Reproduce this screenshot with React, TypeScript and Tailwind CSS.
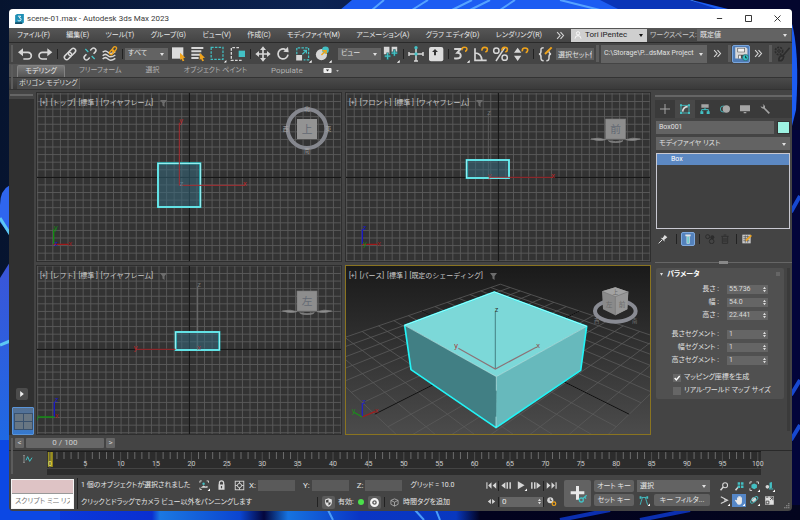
import React from "react";

type Kids = { children?: React.ReactNode };

/* ---------- shared pieces ---------- */

function Icon({ box, cls = "size-[18px]", children }: Kids & { box: string; cls?: string }) {
  return (
    <svg viewBox={box} className={`${cls} shrink-0`} fill="none" aria-hidden="true">
      {children}
    </svg>
  );
}

function Tool({ label, box, children }: Kids & { label: string; box: string }) {
  return (
    <button aria-label={label} className="flex h-5 w-5 shrink-0 items-center justify-center">
      <Icon box={box}>{children}</Icon>
    </button>
  );
}

function Sep() {
  return (
    <span className="flex w-[5px] shrink-0 justify-center">
      <span className="h-[10px] w-px bg-[#222]" />
    </span>
  );
}

function Grip() {
  return <span className="h-[17px] w-[3px] shrink-0 bg-[#5c5c5c]" />;
}

function Drop({ label, value, cls }: { label: string; value: string; cls: string }) {
  return (
    <span className={`relative block shrink-0 bg-[#636363] ${cls}`}>
      <select
        aria-label={label}
        defaultValue={value}
        className="block h-full w-full appearance-none bg-transparent pl-[3px] pr-2 text-inherit outline-none"
      >
        <option>{value}</option>
      </select>
      <svg viewBox="0 0 8 6" className="pointer-events-none absolute right-1 top-1/2 -mt-px h-[3px] w-1" aria-hidden="true">
        <path d="M0 0h8L4 6z" fill="#e0e0e0" />
      </svg>
    </span>
  );
}

const LIGHT = "#d6d6d6";
const TEAL = "#43c0c4";
const GOLD = "#f0a41c";

/* ---------- wallpaper ---------- */

function Wallpaper() {
  return (
    <svg viewBox="0 0 800 520" preserveAspectRatio="none" className="absolute inset-0 h-full w-full" aria-hidden="true">
      <defs>
        <linearGradient id="sky" x1="0" x2="1">
          <stop offset="0" stopColor="#06142f" />
          <stop offset=".4" stopColor="#0c2353" />
          <stop offset="1" stopColor="#04062e" />
        </linearGradient>
        <linearGradient id="petal" x1="0" x2="0" y1="0" y2="1">
          <stop offset="0" stopColor="#3b55d8" />
          <stop offset="1" stopColor="#1272ea" />
        </linearGradient>
        <linearGradient id="bottom" x1="0" x2="1">
          <stop offset="0" stopColor="#0b3fe0" />
          <stop offset=".19" stopColor="#0a2fd0" />
          <stop offset=".2" stopColor="#1b78e2" />
          <stop offset=".3" stopColor="#0b45d0" />
          <stop offset=".33" stopColor="#04063c" />
          <stop offset=".36" stopColor="#1673e0" />
          <stop offset=".45" stopColor="#0a35c4" />
          <stop offset=".57" stopColor="#0838c0" />
          <stop offset=".6" stopColor="#02021e" />
          <stop offset="1" stopColor="#03051e" />
        </linearGradient>
      </defs>
      <rect width="800" height="520" fill="url(#sky)" />
      <path d="M340 10 352 0H690Q770 0 793 40V100L790 10z" fill="#1c5cf2" />
      <path d="M372 10 384 0M412 10 428 0M452 10 472 0M470 10 490 0M500 10 515 0M560 0 600 10M690 0 710 10" stroke="#55a2ff" strokeWidth="2" />
      <path d="M600 0H690L720 10H620z" fill="#0a35b8" />
      <path d="M692 0H800V12H740z" fill="#04062e" />
      <path d="M791 20Q800 50 796 110L791 130z" fill="#1c5cf2" />
      <path d="M791 130H800V520H791z" fill="#02043a" />
      <path d="M791 212 800 196M791 395 800 380M791 440 800 425" stroke="#1748d0" strokeWidth="4" />
      <path d="M10 185Q0 190 0 205V222Q6 230 10 236z" fill="#2f66ee" />
      <path d="M0 218 10 234" stroke="#5cc8f4" strokeWidth="3" />
      <path d="M0 278 10 262V520H0z" fill="url(#petal)" />
      <path d="M0 345 10 341M0 460 10 450" stroke="#5cc8f4" strokeWidth="3" />
      <rect y="505" width="800" height="15" fill="url(#bottom)" />
      <path d="M0 440H10V511H60V520H0z" fill="#0c48e4" />
      <path d="M328 510 333 520M415 510 424 520M436 510 440 520" stroke="#4a9cf8" strokeWidth="2" />
      <path d="M560 520 610 510M640 520 690 510" stroke="#0b2fb0" strokeWidth="4" />
    </svg>
  );
}

/* ---------- title, menu, toolbar, ribbon ---------- */

function TitleBar() {
  return (
    <header className="flex h-[19px] shrink-0 items-center bg-white pl-[6px] text-[#3a3a3a]">
      <Icon box="0 0 28 32" cls="h-[10px] w-[9px]">
        <path d="M0 4 6 0H28V27L22 32H0z" fill="#1f8fb5" />
        <path d="M0 26H22V32H0z" fill="#17506a" />
        <path d="M9 7h9l-5 5q6 0 6 5t-6 5q-3 0-5-2" stroke="#fff" strokeWidth="3" />
      </Icon>
      <h1 className="ml-[3px] whitespace-nowrap text-[8px] leading-none">scene-01.max - Autodesk 3ds Max 2023</h1>
      <div className="ml-auto flex">
        {[
          ["最小化", "M5 12H19"],
          ["最大化", "M4 4H20V20H4z"],
          ["閉じる", "M4 4 20 20M20 4 4 20"],
        ].map(([name, d]) => (
          <button key={name} aria-label={name} className="flex h-[19px] w-[29px] items-center justify-center">
            <Icon box="0 0 24 24" cls="size-[9px]">
              <path d={d} stroke="#222" strokeWidth="2.4" />
            </Icon>
          </button>
        ))}
      </div>
    </header>
  );
}

const MENUS = [
  "ファイル(F)", "編集(E)", "ツール(T)", "グループ(G)", "ビュー(V)", "作成(C)",
  "モディファイヤ(M)", "アニメーション(A)", "グラフ エディタ(D)", "レンダリング(R)",
];

function Chevrons() {
  return (
    <Icon box="0 0 24 24" cls="size-[9px]">
      <path d="M3 3 11 12 3 21M12 3 20 12 12 21" stroke={LIGHT} strokeWidth="3" />
    </Icon>
  );
}

function MenuBar() {
  return (
    <nav className="flex h-[14px] shrink-0 items-center bg-gradient-to-b from-[#565656] to-[#444] pl-2 pr-px text-[7px] text-[#e8e8e8]">
      <div className="flex min-w-0 flex-1 justify-between pr-[14px]">
        {MENUS.map((m) => (
          <button key={m} className="whitespace-nowrap">{m}</button>
        ))}
      </div>
      <button aria-label="その他のメニュー" className="mr-[6px]"><Chevrons /></button>
      <button className="flex h-[13px] w-[76px] shrink-0 items-center bg-[#cfcfcf] pl-[3px] pr-1 text-[8px] text-[#222]">
        <Icon box="0 0 24 24" cls="size-2">
          <circle cx="12" cy="7" r="5" stroke="#fff" strokeWidth="2.5" />
          <path d="M3 23q0-9 9-9t9 9" stroke="#fff" strokeWidth="2.5" />
        </Icon>
        <span className="ml-[3px] whitespace-nowrap">Tori iPentec</span>
        <svg viewBox="0 0 8 6" className="ml-auto h-[3px] w-1" aria-hidden="true"><path d="M0 0h8L4 6z" fill="#111" /></svg>
      </button>
      <span className="ml-[3px] w-[47px] whitespace-nowrap text-[7px] text-[#c8c8c8]">ワークスペース:</span>
      <Drop label="ワークスペース" value="既定値" cls="h-[12px] w-[94px] text-[7px]" />
    </nav>
  );
}

const HOOK = "q-1-10 8-10t8 7q0 5-6 7";

function Toolbar() {
  return (
    <div role="toolbar" aria-label="メイン ツールバー" className="flex h-[22px] shrink-0 items-center border-t border-[#2a2a2a] bg-[#454545] text-[7px] text-[#e0e0e0]">
      <span className="ml-[2px] mr-[1px] w-[3px]"><span className="block h-[17px] w-[2px] bg-[#5c5c5c]" /></span>
      <Tool label="元に戻す" box="48 132 54 54">
        <path d="M62 154H84a10 10 0 0 1 0 20H70" stroke={LIGHT} strokeWidth="5" />
        <path d="M54 154l15-12v24z" fill={LIGHT} />
      </Tool>
      <Tool label="やり直し" box="107 132 54 54">
        <path d="M148 154H126a10 10 0 0 0 0 20H140" stroke={LIGHT} strokeWidth="5" />
        <path d="M156 154l-15-12v24z" fill={LIGHT} />
      </Tool>
      <Sep />
      <Tool label="リンク" box="182 132 54 54">
        <g transform="rotate(-45 209 159)" stroke={LIGHT} strokeWidth="4.5">
          <rect x="188" y="152" width="25" height="14" rx="7" />
          <rect x="205" y="152" width="25" height="14" rx="7" />
        </g>
      </Tool>
      <Tool label="リンク解除" box="243 132 54 54">
        <g transform="rotate(-45 270 159)" stroke={LIGHT} strokeWidth="4.5">
          <path d="M262 152h-7a7 7 0 0 0 0 14h7M278 152h7a7 7 0 0 1 0 14h-7" />
        </g>
        <path d="M256 144l9 9M275 165l9 9" stroke={TEAL} strokeWidth="4" />
      </Tool>
      <Tool label="スペース ワープにバインド" box="304 132 54 54">
        <path d="M309 154q8-8 16 0t22-2M309 164q8-8 16 0t22-2M309 174q8-8 16 0t22-2" stroke={LIGHT} strokeWidth="4.5" />
        <g transform="rotate(-50 340 149)" stroke={GOLD} strokeWidth="4">
          <rect x="326" y="144" width="16" height="10" rx="5" />
          <rect x="338" y="144" width="16" height="10" rx="5" />
        </g>
      </Tool>
      <Sep />
      <Drop label="選択フィルタ" value="すべて" cls="h-[12px] w-[43px]" />
      <Tool label="オブジェクトを選択" box="508 132 54 54">
        <rect x="517" y="139" width="34" height="34" fill="#dcdcdc" />
        <path d="M541 155l16 15-7 1 4 8-5 2-4-8-4 4z" fill={GOLD} />
      </Tool>
      <Tool label="名前による選択" box="570 132 54 54">
        <path d="M577 141h36M577 151h30M577 161h30M577 171h22" stroke={LIGHT} strokeWidth="6" />
        <path d="M602 155l16 15-7 1 4 8-5 2-4-8-4 4z" fill={GOLD} />
      </Tool>
      <Tool label="矩形選択領域" box="634 132 58 58">
        <rect x="641" y="140" width="38" height="38" stroke={TEAL} strokeWidth="4" strokeDasharray="8 4" />
        <path d="M690 180v8h-8z" fill="#fff" />
      </Tool>
      <Tool label="ウィンドウ / 交差" box="694 132 54 54">
        <path d="M724 140H701V178H730V172" stroke={LIGHT} strokeWidth="4" strokeDasharray="8 4" />
        <rect x="723" y="149" width="19" height="19" fill={TEAL} />
      </Tool>
      <Sep />
      <Tool label="移動" box="0 0 54 54">
        <path d="M27 9V45M9 27H45" stroke={LIGHT} strokeWidth="5" />
        <path d="M27 4l9 11H18zM27 50l9-11H18zM4 27l11-9v18zM50 27l-11-9v18z" fill={LIGHT} />
      </Tool>
      <Tool label="回転" box="0 0 54 54">
        <path d="M35 14A15 15 0 1 0 42 29" stroke={LIGHT} strokeWidth="5" />
        <path d="M28 20 42 5 44 22z" fill={LIGHT} />
      </Tool>
      <Tool label="スケール" box="0 0 58 58">
        <path d="M9 30V9H47V48H31" stroke={TEAL} strokeWidth="4" strokeDasharray="8 4" />
        <path d="M7 32H26V50H7z" fill={LIGHT} />
        <path d="M27 30 38 19M30 17h10v10" stroke={TEAL} strokeWidth="4" />
        <path d="M57 48v9h-9z" fill="#fff" />
      </Tool>
      <Tool label="配置" box="0 0 58 58">
        <circle cx="24" cy="31" r="18" fill={LIGHT} />
        <circle cx="37" cy="16" r="11" fill={TEAL} />
        <path d="M24 32 36 20M27 18h12v11" stroke={GOLD} strokeWidth="4.5" />
        <path d="M57 48v9h-9z" fill="#fff" />
      </Tool>
      <span className="w-[5px] shrink-0" />
      <Drop label="参照座標系" value="ビュー" cls="h-[12px] w-[43px]" />
      <Tool label="基点の中心を使用" box="0 0 58 58">
        <path d="M6 6H24V30H6zM31 6H49V22H31z" fill={LIGHT} />
        <path d="M18 24V48M8 36H28M40 14V36M30 26H50" stroke="#2d6668" strokeWidth="8" />
        <path d="M18 26V46M9 36H27M40 17V35M31 26H49" stroke={TEAL} strokeWidth="4" />
        <path d="M57 48v9h-9z" fill="#fff" />
      </Tool>
      <Sep />
      <Tool label="選択とマニピュレート" box="0 0 54 54">
        <path d="M27 10V48M6 27H48M6 21V33M48 21V33M21 48H33" stroke={LIGHT} strokeWidth="4.5" />
        <circle cx="27" cy="8" r="5" fill={TEAL} />
        <circle cx="27" cy="27" r="5" fill={TEAL} />
      </Tool>
      <Tool label="キーボード ショートカットの上書き" box="0 0 54 54">
        <rect x="6" y="6" width="43" height="43" rx="6" fill="#dcdcdc" />
        <path d="M24 12l9 9h-6v10h-6V21h-6z" fill="#333" />
      </Tool>
      <Sep />
      <Tool label="3D スナップ" box="0 0 58 58">
        <path d="M7 13H27L17 25Q29 25 28 36 26 46 7 43" stroke={LIGHT} strokeWidth="6.5" />
        <path d={`M32 17${HOOK}`} stroke={GOLD} strokeWidth="5" />
        <path d="M57 48v9h-9z" fill="#fff" />
      </Tool>
      <Tool label="角度スナップ" box="0 0 54 54">
        <path d="M9 10V46H44M9 24Q28 24 30 46" stroke={LIGHT} strokeWidth="5" />
        <path d={`M30 17${HOOK}`} stroke={GOLD} strokeWidth="5" />
      </Tool>
      <Tool label="パーセント スナップ" box="0 0 54 54">
        <circle cx="13" cy="17" r="8" stroke={LIGHT} strokeWidth="4.5" />
        <circle cx="38" cy="38" r="8" stroke={LIGHT} strokeWidth="4.5" />
        <path d="M12 48 38 8" stroke={LIGHT} strokeWidth="4.5" />
        <path d={`M30 17${HOOK}`} stroke={GOLD} strokeWidth="5" />
      </Tool>
      <Tool label="スピナー スナップ" box="0 0 54 54">
        <path d="M17 8 28 23H6zM17 48 28 32H6z" fill={LIGHT} />
        <path d={`M31 19${HOOK}`} stroke={GOLD} strokeWidth="5" />
      </Tool>
      <Sep />
      <Tool label="名前付き選択セットを編集" box="0 0 54 54">
        <path d="M20 8q-9 0-8 8 1 10-6 11 7 1 6 11-1 9 8 9M28 47q9 0 8-9-1-10 6-11-6-1-6-8" stroke={LIGHT} strokeWidth="4.5" />
        <path d="M24 27 44 7" stroke={GOLD} strokeWidth="6" />
      </Tool>
      <input aria-label="選択セット" defaultValue="選択セット作成" className="h-[12px] w-[38px] shrink-0 bg-[#5e5e5e] px-[2px] text-[7px] outline-none" />
      <span className="ml-[2px] mr-[2px] flex"><Grip /></span>
      <Drop label="プロジェクト フォルダ" value="C:\Storage\P...dsMax Project" cls="h-[18px] w-[106px] text-[7px]" />
      <span className="min-w-0 flex-1" />
      <button aria-label="さらに表示"><Chevrons /></button>
      <span className="ml-[6px] mr-px flex"><Grip /></span>
      <button aria-label="自動バックアップ" className="flex size-[18px] shrink-0 items-center justify-center rounded-[2px] border border-[#79a5dc] bg-[#4f7cb6]">
        <Icon box="0 0 48 48" cls="size-[15px]">
          <path d="M4 4H38L43 9V40H4z" fill="#d8d8d8" />
          <path d="M11 6H35V20H11zM14 28H34V40H14z" fill="#4b4b4b" />
          <path d="M13 8H33V18H13zM16 30H22V40H16z" fill="#f2f2f2" />
          <circle cx="37" cy="37" r="10" fill="#33bfc2" stroke="#28565c" strokeWidth="2" />
          <path d="M37 31V38H42" stroke="#133" strokeWidth="3" />
        </Icon>
      </button>
      <button aria-label="さらに表示" className="ml-1"><Chevrons /></button>
      <span className="ml-[6px] flex"><Grip /></span>
      <Tool label="環境設定" box="0 0 54 54">
        <circle cx="18" cy="18" r="11" stroke="#2c2c2c" strokeWidth="5" strokeDasharray="6 3" />
        <circle cx="18" cy="18" r="4" stroke="#2c2c2c" strokeWidth="3" />
        <path d="M50 8 28 34M28 32q-12 2-10 15 12 2 14-12z" stroke="#2c2c2c" strokeWidth="5" />
      </Tool>
    </div>
  );
}

function Ribbon() {
  return (
    <section aria-label="リボン" className="relative shrink-0 text-[7px] text-[#b0b0b0]">
      <div className="flex h-[13px] items-end bg-[#555] pl-2">
        <button className="h-3 w-12 rounded-t-[2px] border border-b-0 border-[#828282] bg-gradient-to-b from-[#7a7a7a] to-[#555] leading-none text-[#e4e4e4]">モデリング</button>
        <div className="flex h-[13px] items-center gap-6 pl-[14px]">
          <button>フリーフォーム</button>
          <button>選択</button>
          <button>オブジェクト ペイント</button>
          <button className="text-[8px]">Populate</button>
        </div>
        <button aria-label="リボン表示" className="ml-5 flex h-[13px] items-center gap-1">
          <Icon box="0 0 26 16" cls="h-[5px] w-[9px]">
            <rect width="26" height="16" rx="3" fill="#ececec" />
            <path d="M8 5h10l-5 6z" fill="#333" />
          </Icon>
          <Icon box="0 0 8 6" cls="h-[2px] w-[3px]"><path d="M0 0h8L4 6z" fill="#bbb" /></Icon>
        </button>
      </div>
      <div className="flex h-[13px] items-center border-y border-[#333] bg-gradient-to-b from-[#4a4a4a] to-[#3a3a3a] pl-2">
        <button className="h-[11px] whitespace-nowrap border-r border-[#5a5a5a] bg-[#4c4c4c] px-[2px] leading-none text-[#dcdcdc]">ポリゴン モデリング</button>
      </div>
      <span className="absolute left-[2px] top-px h-6 w-[2px] bg-[#5c5c5c]" />
    </section>
  );
}

/* ---------- viewports ---------- */

function ViewLabel({ name, mode }: { name: string; mode: string }) {
  return (
    <div className="absolute left-[3px] top-[5px] flex items-center gap-[3px] text-[7px] leading-[10px] text-[#c8c8c8] [font-feature-settings:normal]">
      <button>[+]</button>
      <button>[{name}]</button>
      <button>[標準 ]</button>
      <button>[{mode}]</button>
      <button aria-label="フィルタ" className="ml-1">
        <Icon box="0 0 20 20" cls="size-[7px]"><path d="M0 0H20L13 9V20L7 16V9z" fill="#6c6c6c" /></Icon>
      </button>
    </div>
  );
}

function Viewport({ name, mode, box, active, children }: Kids & { name: string; mode: string; box: string; active?: boolean }) {
  return (
    <section
      aria-label={name}
      className={`relative min-h-0 min-w-0 overflow-hidden border ${active ? "border-[#8a7420]" : "border-[#2e2e2e]"} bg-[#333]`}
    >
      <svg viewBox={box} preserveAspectRatio="xMidYMid slice" className="absolute inset-0 h-full w-full" fontFamily="'Liberation Sans', 'Noto Sans CJK JP', sans-serif" fontSize="22">
        {children}
      </svg>
      <ViewLabel name={name} mode={mode} />
    </section>
  );
}

function Grid({ cx, cy }: { cx: number; cy: number }) {
  const step = 22.75;
  const n = Array.from({ length: 81 }, (_, i) => i - 40);
  return (
    <g>
      <g stroke="#5a5a5a" strokeWidth="2.8">
        {n.map((i) => <path key={i} d={`M${cx + i * step} -40V560M-60 ${cy + i * step}H1100`} />)}
      </g>
      <path d={`M${cx} -40V560M-60 ${cy}H1100`} stroke="#0c0c0c" strokeWidth="3" />
    </g>
  );
}

function SideCube({ x, y, glyph }: { x: number; y: number; glyph: string }) {
  return (
    <g>
      <path
        d={`M${x - 74} ${y + 31}q24-6 44 2-22 6-44-2zM${x + 74} ${y + 31}q-24-6-44 2 22 6 44-2zM${x - 22} ${y + 36}q22 6 44 0l-6 4q-16 3-32 0z`}
        fill="#8f8f8f"
        stroke="#858585"
        strokeWidth="2"
      />
      <rect x={x - 30} y={y - 29} width="60" height="60" fill="#8d8d8d" stroke="#7a7a7a" strokeWidth="2" />
      <text x={x} y={y + 12} fontSize="32" textAnchor="middle" fill="#646a74">{glyph}</text>
    </g>
  );
}

function Tripod({ x, y, up, upColor, side, sideColor, flip, dot, dotColor }: {
  x: number; y: number; up: string; upColor: string; side: string; sideColor: string; flip?: boolean; dot: string; dotColor: string;
}) {
  const d = flip ? -1 : 1;
  return (
    <g>
      <path d={`M${x} ${y}V${y - 45}`} stroke={upColor} strokeWidth="4" />
      <path d={`M${x} ${y}h${45 * d}`} stroke={sideColor} strokeWidth="4" />
      <text x={x + 1} y={y - 44} fill={upColor}>{up}</text>
      <text x={x + 50 * d} y={y + 5} textAnchor="middle" fill={sideColor}>{side}</text>
      <text x={x + 2} y={y + 4} fill={dotColor}>{dot}</text>
    </g>
  );
}

function Selected({ x, y, w, h }: { x: number; y: number; w: number; h: number }) {
  return (
    <g>
      <rect x={x} y={y} width={w} height={h} fill="#35687c" fillOpacity=".55" stroke="#2fd8dc" strokeWidth="6" />
      <rect x={x} y={y} width={w} height={h} fill="none" stroke="#c8f6f8" strokeWidth="2" />
    </g>
  );
}

/* Projects a point of the ground plane, with u and v from -1 to 1, on the screen. */
function ground(u: number, v: number) {
  const w = 1 + 0.236 * u + 0.236 * v;
  const x = (483.5 + 404 * u - 179.4 * v) / w;
  const y = (271.3 - 82.2 * u - 82.2 * v) / w;
  return `${x.toFixed(1)} ${y.toFixed(1)}`;
}

function Perspective() {
  const lines = Array.from({ length: 15 }, (_, i) => (i - 7) / 7);
  return (
    <g>
      <defs>
        <linearGradient id="depth" x1="0" x2="0" y1="0" y2="1">
          <stop offset="0" stopColor="#191919" />
          <stop offset="1" stopColor="#4c4c4c" />
        </linearGradient>
      </defs>
      <rect x="-100" y="10" width="1200" height="520" fill="url(#depth)" />
      <g stroke="#5a5a5a" strokeWidth="2.4">
        {lines.map((t) => <path key={t} d={`M${ground(t, -1)}L${ground(t, 1)}M${ground(-1, t)}L${ground(1, t)}`} />)}
      </g>
      <path d={`M${ground(-1, 0)}L${ground(1, 0)}M${ground(0, -1)}L${ground(0, 1)}`} stroke="#0e0e0e" strokeWidth="3" />
      <path d="M463 96 740 199 469 350 194 196z" fill="#7cd8d8" />
      <path d="M194 196 469 350 468 503 213 329z" fill="#417f84" />
      <path d="M740 199 469 350 468 503 722 331z" fill="#67b9bc" />
      <path d="M194 196 463 96 740 199 722 331 468 503 213 329z" fill="none" stroke="#22f4f6" strokeWidth="5" strokeLinejoin="round" />
      <path d="M740 199 469 350 194 196M469 350V392M468 470V503" fill="none" stroke="#bdeeee" strokeWidth="2" />
      <path d="M194 196 463 96 740 199" fill="none" stroke="#c4fafa" strokeWidth="2.5" />
      <path d="M466 327V155" stroke="#4b8b8e" strokeWidth="3.5" />
      <path d="M355 265 466 327 590 261" fill="none" stroke="#8c7276" strokeWidth="3.5" />
      <text x="464" y="156" fill="#333">z</text>
      <text x="343" y="263" fill="#a33">y</text>
      <text x="589" y="263" fill="#844">x</text>
      <ellipse cx="826" cy="153" rx="61" ry="32" fill="none" stroke="#898b93" strokeWidth="12" />
      <path d="M786 94 826 82 865 95 862 148 826 166 789 148z" fill="#8a8a8a" />
      <path d="M786 94 826 110 865 95 826 82z" fill="#a2a2a2" />
      <path d="M826 110 865 95 862 148 826 166z" fill="#979797" />
      <path d="M786 94 826 110 865 95M826 110V166" fill="none" stroke="#757575" strokeWidth="2" />
      <text x="818" y="103" fontSize="16" fill="#686868">上</text>
      <text x="797" y="141" fontSize="20" fill="#6c6c6c">左</text>
      <text x="836" y="140" fontSize="20" fill="#6c6c6c">前</text>
      <text x="762" y="188" fontSize="16" fill="#777">西</text>
      <text x="876" y="188" fontSize="16" fill="#777">南</text>
      <path d="M67 471V430" stroke="#2222c0" strokeWidth="4" />
      <path d="M67 471 106 454" stroke="#a51c1c" strokeWidth="4" />
      <path d="M67 471 42 457" stroke="#1c8a1c" strokeWidth="4" />
      <text x="67" y="433" fill="#2222c0">z</text>
      <text x="104" y="459" fill="#a51c1c">x</text>
      <text x="35" y="460" fill="#1c8a1c">y</text>
    </g>
  );
}

const RED = "#a01818";
const GREEN = "#128c12";
const BLUE = "#1818c4";

function Viewports() {
  return (
    <div className="grid min-w-0 flex-1 grid-cols-2 grid-rows-2 gap-[3px]">
      <Viewport name="トップ" mode="ワイヤフレーム" box="111 9 912 504">
        <Grid cx={568} cy={262} />
        <Selected x={474} y={220} w={127} h={131} />
        <path d="M538 285V98M538 286H734" stroke="#a52c30" strokeWidth="3" fill="none" />
        <text x="538" y="98" fill="#c02424">y</text>
        <text x="729" y="287" fill="#c02424">x</text>
        <text x="539" y="287" fill="#5f7f90">z</text>
        <circle cx="921" cy="116" r="58" fill="none" stroke="#85878e" strokeWidth="12" />
        <rect x="891" y="87" width="60" height="60" fill="#939393" />
        <text x="921" y="128" fontSize="32" textAnchor="middle" fill="#646a74">上</text>
        <g fontSize="18" textAnchor="middle" fill="#a4a4a4">
          <text x="921" y="62">北</text>
          <text x="921" y="190">南</text>
          <text x="857" y="124">西</text>
          <text x="985" y="124">東</text>
        </g>
        <Tripod x={161} y={463} up="y" upColor={GREEN} side="x" sideColor={RED} dot="z" dotColor={BLUE} />
      </Viewport>
      <Viewport name="フロント" mode="ワイヤフレーム" box="18 9 912 504">
        <Grid cx={475} cy={262} />
        <path d="M445 262V75" stroke="#5c5c5c" strokeWidth="3" />
        <Selected x={380} y={210} w={127} h={54} />
        <path d="M448 262H640" stroke="#a52c30" strokeWidth="3" />
        <text x="442" y="75" fill="#777">z</text>
        <text x="634" y="264" fill="#c02424">x</text>
        <text x="443" y="264" fill="#953c44">y</text>
        <SideCube x={827} y={116} glyph="前" />
        <Tripod x={67} y={463} up="z" upColor={BLUE} side="x" sideColor={RED} dot="y" dotColor={GREEN} />
      </Viewport>
      <Viewport name="レフト" mode="ワイヤフレーム" box="111 12 912 504">
        <Grid cx={568} cy={262} />
        <path d="M593 262V75" stroke="#6c6c6c" strokeWidth="3" />
        <Selected x={527} y={210} w={131} h={54} />
        <path d="M408 262H527" stroke="#a52c30" strokeWidth="3" />
        <text x="592" y="75" fill="#777">z</text>
        <text x="401" y="264" fill="#c02424">y</text>
        <text x="592" y="264" fill="#953c44">x</text>
        <SideCube x={921} y={116} glyph="左" />
        <Tripod x={163} y={465} up="z" upColor={BLUE} side="y" sideColor={GREEN} flip dot="x" dotColor={RED} />
      </Viewport>
      <Viewport name="パース" mode="既定のシェーディング" box="18 18 912 504" active>
        <Perspective />
      </Viewport>
    </div>
  );
}

function LayoutStrip() {
  return (
    <aside className="flex w-[25px] shrink-0 flex-col">
      <span className="mx-px mt-[2px] h-[2px] bg-[#656565]" />
      <div className="mt-[3px] flex flex-1 flex-col items-end justify-end bg-[#303030]">
        <button aria-label="レイアウトを開く" className="mb-[7px] mr-[6px] flex size-3 items-center justify-center rounded-[2px] bg-[#4c4c4c]">
          <Icon box="0 0 12 20" cls="h-[6px] w-[4px]"><path d="M0 0 12 10 0 20z" fill="#eee" /></Icon>
        </button>
        <button aria-label="4 分割レイアウト" className="flex h-7 w-[22px] items-center justify-center rounded-[1px] border border-[#5a94d8] bg-gradient-to-b from-[#56708f] to-[#3579cf]">
          <span className="grid grid-cols-2 gap-px bg-[#39516e] p-px">
            {[0, 1, 2, 3].map((i) => <span key={i} className="h-[7px] w-2 bg-[#687683]" />)}
          </span>
        </button>
      </div>
    </aside>
  );
}

/* ---------- command panel ---------- */

function Spin({ id, label, value }: { id: string; label: string; value: string }) {
  return (
    <div className="flex h-[10px] items-center justify-end">
      <label htmlFor={id} className="whitespace-nowrap">{label} :</label>
      <span className="ml-2 mr-4 flex h-[9px] w-[41px] items-center bg-[#656565] pr-[2px]">
        <input id={id} defaultValue={value} className="h-full w-full min-w-0 bg-transparent pl-[2px] text-[7px] text-[#dadada] outline-none" />
        <SpinArrows />
      </span>
    </div>
  );
}

function SpinArrows() {
  return (
    <Icon box="0 0 10 20" cls="h-[7px] w-[3px]"><path d="M0 8 5 1 10 8zM0 12 5 19 10 12z" fill="#dcdcdc" /></Icon>
  );
}

function PanelTabs() {
  const t = "#a4a4a4";
  const tabs: [string, React.ReactNode][] = [
    ["作成", <path key="a" d="M15 0V30M0 15H30" stroke={t} strokeWidth="3" />],
    ["修正", (
      <g key="b">
        <rect x="3" y="4" width="24" height="23" stroke={TEAL} strokeWidth="2.5" />
        <path d="M8 23Q9 9 23 8" stroke="#ddd" strokeWidth="5" />
        <path d="M0 1H6V7H0zM24 1H30V7H24zM0 24H6V30H0zM24 24H30V30H24z" fill={TEAL} />
      </g>
    )],
    ["階層", (
      <g key="c">
        <path d="M4 1H26V11H4z" fill={t} />
        <path d="M15 11V17M5 24V17H25V24" stroke={TEAL} strokeWidth="3" />
        <path d="M1 22H10V30H1zM20 22H29V30H20z" fill={TEAL} />
      </g>
    )],
    ["モーション", (
      <g key="d">
        <circle cx="10" cy="15" r="9" stroke={TEAL} strokeWidth="2.5" />
        <circle cx="19" cy="15" r="11" fill="#a8a8a8" />
      </g>
    )],
    ["表示", <path key="e" d="M0 4H30V22H0zM11 24H19V28H11z" fill={t} />],
    ["ユーティリティ", (
      <g key="f">
        <path d="M12 12 28 28" stroke={t} strokeWidth="5" />
        <path d="M2 6A8 8 0 0 0 14 13 8 8 0 0 0 8 1L11 6 7 10z" fill={t} />
      </g>
    )],
  ];
  return (
    <div role="tablist" className="flex h-[18px] bg-[#3a3a3a]">
      {tabs.map(([name, art]) => (
        <button key={name} role="tab" aria-label={name} aria-selected={name === "修正"} className={`flex w-5 items-center justify-center ${name === "修正" ? "bg-[#484848]" : ""}`}>
          <Icon box="0 0 30 30" cls="size-[10px]">{art}</Icon>
        </button>
      ))}
    </div>
  );
}

function StackTools() {
  const bar = <span className="h-[10px] w-px bg-[#222]" />;
  return (
    <div className="mt-[2px] flex h-4 items-center text-[#2c2c2c]">
      <button aria-label="スタックを固定" className="ml-[3px] mr-[8px]">
        <Icon box="0 0 30 30" cls="size-[10px]">
          <path d="M2 28 12 18" stroke="#ddd" strokeWidth="3" />
          <path d="M8 11 14 12 20 3 28 10 19 17 20 23z" fill="#ddd" />
        </Icon>
      </button>
      {bar}
      <button aria-label="最終結果を表示" className="ml-[4px] mr-[4px] flex size-[14px] items-center justify-center rounded-[2px] border border-[#7fa9de] bg-[#5482bc]">
        <Icon box="0 0 20 34" cls="h-[10px] w-[6px]">
          <path d="M1 2H19V8H1z" fill="#e4e4e4" />
          <path d="M6 8H15V32H6z" fill="#6ec9cc" stroke="#e4e4e4" strokeWidth="2" />
        </Icon>
      </button>
      {bar}
      <button aria-label="固有にする" className="ml-[5px] mr-[5px]">
        <Icon box="0 0 30 30" cls="size-[10px]">
          <circle cx="8" cy="8" r="6" stroke="currentColor" strokeWidth="3" />
          <circle cx="22" cy="10" r="6" fill="currentColor" />
          <circle cx="20" cy="22" r="7" stroke="currentColor" strokeWidth="3" />
        </Icon>
      </button>
      <button aria-label="モディファイヤを除去" className="mr-[6px]">
        <Icon box="0 0 30 30" cls="size-[10px]">
          <path d="M4 7H26M11 3H19M7 8V28H23V8M12 12V24M18 12V24" stroke="currentColor" strokeWidth="2.5" />
        </Icon>
      </button>
      {bar}
      <button aria-label="モディファイヤ セットを設定" className="ml-[5px]">
        <Icon box="0 0 30 30" cls="size-[10px]">
          <rect x="1" y="2" width="25" height="26" fill="#c8c8c8" />
          <path d="M4 8H22M4 14H22M4 20H22M10 4V26M17 4V26" stroke="#555" strokeWidth="2" />
          <path d="M12 20 28 4" stroke={GOLD} strokeWidth="5" />
        </Icon>
      </button>
    </div>
  );
}

function Check({ label, on }: { label: string; on?: boolean }) {
  return (
    <label className="flex h-[13px] items-center gap-[3px] pl-[17px] text-[7px]">
      <span className="relative flex size-2 shrink-0">
        <input type="checkbox" defaultChecked={on} className="peer size-2 appearance-none bg-[#666]" />
        <svg viewBox="0 0 24 24" className="pointer-events-none absolute inset-0 hidden size-2 peer-checked:block" fill="none" aria-hidden="true">
          <path d="M5 12 10 18 20 6" stroke="#fff" strokeWidth="4" />
        </svg>
      </span>
      <span className="whitespace-nowrap">{label}</span>
    </label>
  );
}

function CommandPanel() {
  return (
    <aside className="flex w-[139px] shrink-0 flex-col pl-[2px] pt-[3px] text-[7px] text-[#e0e0e0]">
      <span className="h-[2px] bg-[#656565]" />
      <div className="mt-[3px]"><PanelTabs /></div>
      <div className="mt-[3px] flex h-[13px] gap-[3px] pl-px pr-[2px]">
        <input aria-label="オブジェクト名" defaultValue="Box001" className="min-w-0 flex-1 bg-[#636363] pl-[3px] text-[7px] outline-none" />
        <button aria-label="オブジェクト カラー" className="w-[13px] border border-[#333] bg-[#9df2e2]" />
      </div>
      <div className="mt-[3px] pl-px pr-[2px]">
        <Drop label="モディファイヤ リスト" value="モディファイヤ リスト" cls="h-[13px] w-full" />
      </div>
      <ul aria-label="モディファイヤ スタック" className="ml-px mr-[2px] mt-[3px] h-[76px] border border-[#c9c9d2] bg-[#404040]">
        <li className="flex h-[11px] items-center bg-[#5c88c2] pl-[14px] text-white">Box</li>
      </ul>
      <StackTools />
      <div className="mt-[13px] flex h-1 items-center justify-center bg-[linear-gradient(#666,#666)] bg-[length:100%_1px] bg-center bg-no-repeat">
        <span className="h-[3px] w-[9px] bg-[#888]" />
      </div>
      <div className="mt-1 flex min-h-0 flex-1 gap-[3px]">
        <section className="mb-auto ml-px flex-1 rounded-[2px] bg-[#505050] pb-[2px]">
          <h2 className="flex h-3 items-center px-1 text-[7px] font-bold text-white">
            <Icon box="0 0 8 8" cls="mr-1 size-[3px]"><path d="M0 0H8L4 7z" fill="#ddd" /></Icon>
            パラメータ
            <span className="ml-auto size-1 bg-[#656565]" />
          </h2>
          <div className="mt-1 flex flex-col gap-[3px]">
            <Spin id="len" label="長さ" value="55.736" />
            <Spin id="wid" label="幅" value="54.0" />
            <Spin id="hei" label="高さ" value="22.441" />
          </div>
          <div className="mt-[9px] flex flex-col gap-[3px]">
            <Spin id="lseg" label="長さセグメント" value="1" />
            <Spin id="wseg" label="幅セグメント" value="1" />
            <Spin id="hseg" label="高さセグメント" value="1" />
          </div>
          <div className="mt-[6px]">
            <Check label="マッピング座標を生成" on />
            <Check label="リアル-ワールド マップ サイズ" />
          </div>
        </section>
        <span className="mb-1 mr-[2px] w-[3px] bg-[#3a3a3a]" />
      </div>
    </aside>
  );
}

/* ---------- time line ---------- */

function frameX(n: number) {
  return `${(0.4 + n * 0.9915).toFixed(3)}%`;
}

function Timeline() {
  const frames = Array.from({ length: 101 }, (_, i) => i);
  return (
    <section aria-label="タイムライン" className="relative shrink-0 text-[8px] text-[#d0d0d0]">
      <span className="absolute left-[2px] top-[2px] h-9 w-[2px] bg-[#5c5c5c]" />
      <div className="flex h-[14px] items-center gap-[2px] pl-[6px]">
        <button aria-label="前のフレーム" className="flex h-[10px] w-[9px] items-center justify-center rounded-[1px] bg-[#666] leading-none">&lt;</button>
        <button className="flex h-[10px] w-[78px] items-center justify-center rounded-[1px] bg-[#676767] leading-none">0 / 100</button>
        <button aria-label="次のフレーム" className="flex h-[10px] w-[9px] items-center justify-center rounded-[1px] bg-[#666] leading-none">&gt;</button>
      </div>
      <div className="flex h-[26px] items-start border-t border-[#2a2a2a] pl-[6px]">
        <button aria-label="ミニ カーブ エディタ" className="flex h-4 w-8 items-center pl-2">
          <Icon box="0 0 30 24" cls="h-2 w-[10px]">
            <path d="M3 1V22M0 1H6M0 22H6" stroke="#999" strokeWidth="2.5" />
            <path d="M9 16 14 5 20 19 27 8" stroke={TEAL} strokeWidth="3" />
          </Icon>
        </button>
        <div className="mr-[31px] h-6 min-w-0 flex-1 border-t border-[#1e1e1e] bg-[#2c2c2c]">
          <svg className="h-full w-full overflow-visible" aria-hidden="true">
            <line x1="0" x2="100%" y1="16.5" y2="16.5" stroke="#444" />
            <svg x={frameX(0)} className="overflow-visible"><rect x="-2" width="5" height="15" fill="#9a901e" /></svg>
            {frames.map((n) => (
              <line key={n} x1={frameX(n)} x2={frameX(n)} y1="0" y2={n % 5 === 0 ? 16 : 7} stroke={n % 5 === 0 ? "#505050" : "#6c6c6c"} />
            ))}
            {frames.filter((n) => n % 5 === 0).map((n) => (
              <text key={n} x={frameX(n)} y="14" textAnchor="middle" fill={n ? "#cccccc" : "#f2ea6c"} fontSize="7">{n}</text>
            ))}
          </svg>
        </div>
      </div>
    </section>
  );
}

/* ---------- status bar ---------- */

function Coord({ axis }: { axis: string }) {
  return (
    <label className="flex items-center gap-[2px]">
      {axis}:
      <input className="h-[11px] w-[37px] bg-[#5a5a5a] text-[8px] outline-none" />
    </label>
  );
}

function Small({ label, box, children, cls = "" }: Kids & { label: string; box: string; cls?: string }) {
  return (
    <button aria-label={label} className={`flex h-[13px] shrink-0 items-center justify-center ${cls}`}>
      <Icon box={box} cls="size-[11px]">{children}</Icon>
    </button>
  );
}

const DIV = <span className="h-[10px] w-px shrink-0 bg-[#222]" />;
const CORNER = <path d="M36 28v8h-8z" fill="#fff" />;

function StatusBar() {
  return (
    <footer className="flex h-[35px] shrink-0 items-start pl-[2px] pt-[2px] text-[7px] text-[#e4e4e4]">
      <div className="mt-px flex h-[30px] w-[63px] shrink-0 flex-col border border-[#f4f4f4] bg-white">
        <div className="h-[14px] border-b border-[#999] bg-[#dec3c5]" />
        <input aria-label="スクリプト ミニ リスナー" defaultValue="スクリプト ミニ リス" className="min-h-0 w-full flex-1 bg-white px-[3px] text-[7px] text-[#777] outline-none" />
      </div>
      <span className="ml-[3px] mr-[3px] h-[31px] w-px shrink-0 bg-[#222]" />
      <div className="flex min-w-0 flex-1 flex-col gap-[2px]">
        <div className="flex h-[15px] items-center whitespace-nowrap">
          <p className="w-[116px] shrink-0">1 個のオブジェクトが選択されました</p>
          <Small label="選択を分離" box="0 0 36 36" cls="w-[15px]">
            <path d="M3 9V3H9M25 3H31V9M3 25V31H9" stroke={LIGHT} strokeWidth="3" />
            <circle cx="15" cy="12" r="4" fill={TEAL} />
            <path d="M7 24 15 18 21 21 28 20V25H7z" fill={LIGHT} />
            {CORNER}
          </Small>
          <Small label="選択をロック" box="0 0 36 36" cls="w-[19px]">
            <path d="M11 16V10a7 7 0 0 1 14 0V16" stroke={LIGHT} strokeWidth="4" />
            <path d="M8 15H28V32H8zM16 20V27H20V20z" fill={LIGHT} fillRule="evenodd" />
          </Small>
          <Small label="絶対モード" box="0 0 36 36" cls="mr-[2px] w-[16px]">
            <rect x="4" y="4" width="28" height="28" stroke={LIGHT} strokeWidth="3" />
            <circle cx="18" cy="18" r="7" stroke={LIGHT} strokeWidth="3" />
            <path d="M18 4V11M18 25V32M4 18H11M25 18H32" stroke={LIGHT} strokeWidth="3" />
          </Small>
          <span className="flex gap-2 text-[8px]">
            <Coord axis="X" />
            <Coord axis="Y" />
            <Coord axis="Z" />
          </span>
          <span className="ml-2">グリッド = 10.0</span>
        </div>
        <div className="flex h-[14px] items-center whitespace-nowrap">
          <p className="w-[236px] shrink-0">クリックとドラッグでカメラ ビュー以外をパンニングします</p>
          {DIV}
          <Small label="シールド" box="0 0 36 36" cls="ml-1 w-[13px] rounded-[2px] bg-[#5c5c5c]">
            <path d="M18 4 29 8V17Q29 28 18 32 7 28 7 17V8z" fill="#e0e0e0" />
            <path d="M18 8V18H10V11zM18 18H26Q25 25 18 28z" fill="#444" />
          </Small>
          <span className="ml-[3px] w-[20px]">有効:</span>
          <span className="size-[6px] rounded-full bg-[#4be04b]" />
          <Small label="有効化" box="0 0 36 36" cls="ml-1 w-[13px] rounded-[2px] bg-[#5c5c5c]">
            <circle cx="18" cy="18" r="11" stroke="#f4f4f4" strokeWidth="7" />
            <circle cx="18" cy="18" r="3" fill="#f4f4f4" />
          </Small>
          <span className="ml-[3px] flex">{DIV}</span>
          <button className="ml-[5px] flex items-center gap-1">
            <Icon box="0 0 30 30" cls="size-[9px]">
              <path d="M15 3 27 8V21L15 27 3 21V8zM3 8 15 14 27 8M15 14V27" stroke="#bbb" strokeWidth="2.5" />
            </Icon>
            時間タグを追加
          </button>
        </div>
      </div>
      <PlayControls />
    </footer>
  );
}

function PlayControls() {
  return (
    <div className="flex shrink-0 items-start">
      <div className="flex w-[76px] flex-col gap-[2px]">
        <div className="flex h-[15px] items-center">
          <Small label="先頭へ" box="0 0 30 30" cls="w-[13px]"><path d="M1 6H4V24H1zM15 6V24L6 15zM28 6V24L18 15z" fill={LIGHT} /></Small>
          {DIV}
          <Small label="前フレーム" box="0 0 30 30" cls="w-[15px]"><path d="M12 6V24L1 15zM15 6H19V24H15zM23 6H27V24H23z" fill={LIGHT} /></Small>
          <Small label="再生" box="0 0 36 36" cls="w-[14px]"><path d="M6 4 28 17 6 30z" fill={LIGHT} />{CORNER}</Small>
          <Small label="次フレーム" box="0 0 30 30" cls="w-[15px]"><path d="M18 6V24L29 15zM11 6H15V24H11zM3 6H7V24H3z" fill={LIGHT} /></Small>
          {DIV}
          <Small label="末尾へ" box="0 0 30 30" cls="w-[15px]"><path d="M26 6H29V24H26zM15 6V24L24 15zM2 6V24L12 15z" fill={LIGHT} /></Small>
        </div>
        <div className="flex h-[13px] items-center">
          <Small label="キー モード" box="0 0 36 36" cls="w-[13px]"><path d="M16 10V26L6 18zM20 10V26L30 18z" fill={LIGHT} /></Small>
          {DIV}
          <span className="ml-px flex h-[10px] w-[43px] items-center bg-[#656565] pr-[2px]">
            <input aria-label="現在のフレーム" defaultValue="0" className="h-full w-full min-w-0 bg-transparent pl-[2px] text-[8px] outline-none" />
            <SpinArrows />
          </span>
          {DIV}
          <Small label="時間設定" box="0 0 36 36" cls="w-[15px]">
            <circle cx="14" cy="14" r="10" fill={LIGHT} />
            <path d="M14 8V15H19" stroke="#444" strokeWidth="3" />
            <circle cx="26" cy="25" r="6" stroke={GOLD} strokeWidth="4" />
          </Small>
        </div>
      </div>
      <button aria-label="キーを設定" className="ml-[3px] mt-[2px] flex h-[27px] w-[27px] items-center justify-center rounded-[2px] bg-[#626262]">
        <Icon box="0 0 60 60" cls="size-5">
          <path d="M24 6H33V22H49V31H33V47H24V31H8V22H24z" fill="#e8e8e8" />
          <circle cx="40" cy="48" r="6" stroke={TEAL} strokeWidth="4" />
          <path d="M44 44 56 34M50 39 54 44" stroke={TEAL} strokeWidth="4" />
        </Icon>
      </button>
      <div className="ml-[3px] mt-[2px] grid gap-[2px] whitespace-nowrap">
        <button className="h-3 w-10 rounded-[2px] bg-[#626262] leading-none">オート キー</button>
        <button className="h-3 w-10 rounded-[2px] bg-[#626262] leading-none">セット キー</button>
      </div>
      <div className="ml-[3px] mt-[2px] grid w-[73px] gap-[2px] whitespace-nowrap">
        <Drop label="選択セット フィルタ" value="選択" cls="h-3 w-full" />
        <div className="flex">
          <Small label="接線" box="0 0 36 36" cls="mr-[2px] w-[15px]">
            <path d="M4 32Q10 10 12 8M28 32Q22 10 20 8M8 8H24" stroke={TEAL} strokeWidth="3" />
            <path d="M2 4H8V12H2zM24 4H30V12H24z" fill={TEAL} />
            {CORNER}
          </Small>
          <button className="h-3 flex-1 rounded-[2px] bg-[#626262] leading-none">キー フィルタ...</button>
        </div>
      </div>
      <div className="ml-[7px] mt-[2px] grid grid-cols-4 gap-x-px gap-y-px">
        <Small label="ズーム" box="0 0 36 36" cls="w-[14px]">
          <circle cx="20" cy="14" r="8" stroke={LIGHT} strokeWidth="3.5" /><path d="M14 20 5 30" stroke={LIGHT} strokeWidth="5" />
        </Small>
        <Small label="すべてズーム" box="0 0 36 36" cls="w-[14px]">
          <path d="M14 20 5 30" stroke={LIGHT} strokeWidth="5" />
          <path d="M12 4H20V12H12zM23 4H31V12H23zM12 15H20V23H12zM23 15H31V23H23z" fill={TEAL} />
        </Small>
        <Small label="全範囲ズーム" box="0 0 36 36" cls="w-[14px]">
          <path d="M3 10V3H10M24 3H31V10M3 24V31H10" stroke={LIGHT} strokeWidth="3" />
          <path d="M17 8 26 12V22L17 27 8 22V12z" fill={TEAL} />{CORNER}
        </Small>
        <Small label="選択範囲ズーム" box="0 0 36 36" cls="w-[14px]">
          <path d="M18 6 26 3V22L18 26z" fill={TEAL} /><circle cx="11" cy="19" r="6" fill={LIGHT} />
          <path d="M16 26H30" stroke={TEAL} strokeWidth="3" />{CORNER}
        </Small>
        <Small label="視野" box="0 0 36 36" cls="w-[14px]">
          <path d="M6 6 28 17 6 28M18 11Q22 17 18 23" stroke={LIGHT} strokeWidth="3.5" />{CORNER}
        </Small>
        <Small label="パン" box="0 0 36 36" cls="w-[14px] bg-[#5586c6]">
          <path d="M10 16V9q2-3 4 0V5q2-3 4 0v0q2-3 4 0v3q2-2 4 0v14q0 10-9 10-6 0-8-6L3 18q2-4 5-1z" fill="#e8e8e8" />{CORNER}
        </Small>
        <Small label="オービット" box="0 0 36 36" cls="w-[14px]">
          <circle cx="16" cy="15" r="8" fill={LIGHT} /><ellipse cx="17" cy="16" rx="15" ry="6" transform="rotate(-40 17 16)" stroke={TEAL} strokeWidth="3" />{CORNER}
        </Small>
        <Small label="ビューポートを最大化" box="0 0 36 36" cls="w-[14px]">
          <path d="M4 4H32V32H4z" fill="#e0e0e0" /><path d="M19 7H29V17M29 7 20 16M7 20H16V29H7zM7 7H14" stroke="#444" strokeWidth="3" />
        </Small>
      </div>
      <Icon box="0 0 18 18" cls="ml-2 mr-[2px] mt-[25px] size-[6px]">
        <path d="M13 1h3v3h-3zM7 7h3v3H7zM13 7h3v3h-3zM1 13h3v3H1zM7 13h3v3H7zM13 13h3v3h-3z" fill="#bbb" />
      </Icon>
    </div>
  );
}

export default function App() {
  return (
    <div className="relative flex min-h-screen w-full flex-col pb-[9px] pl-[9px] pr-2 pt-[9px] font-['Roboto','Noto_Sans_CJK_JP',sans-serif] [font-feature-settings:'palt']" lang="ja">
      <Wallpaper />
      <main className="relative flex min-h-0 flex-1 flex-col overflow-hidden rounded-[4px] bg-[#444]">
        <TitleBar />
        <MenuBar />
        <Toolbar />
        <Ribbon />
        <div className="flex min-h-[346px] flex-1 gap-[2px] pb-px pt-[2px]">
          <LayoutStrip />
          <Viewports />
          <CommandPanel />
        </div>
        <Timeline />
        <StatusBar />
      </main>
    </div>
  );
}
